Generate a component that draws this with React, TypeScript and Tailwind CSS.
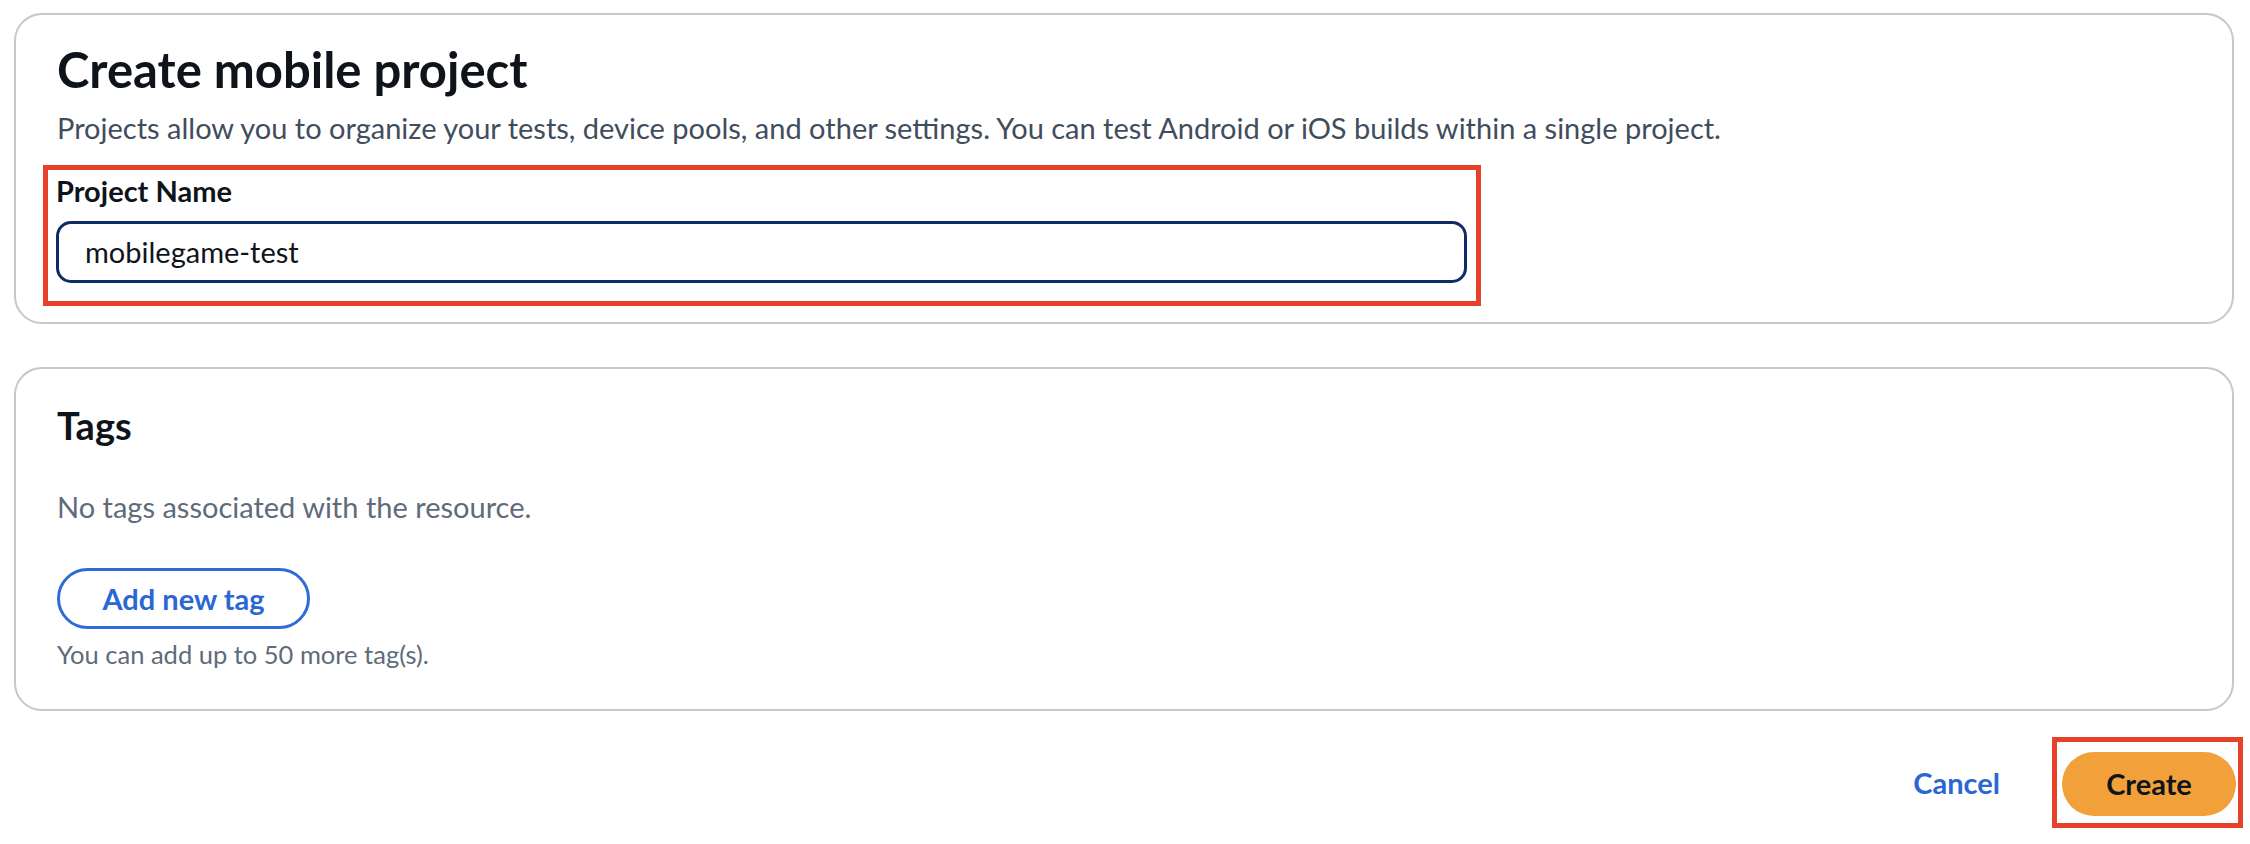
const font = { fontFamily: 'Lato, "Open Sans", Arial, sans-serif' };

function Card({ children, className = '' }: { children: React.ReactNode; className?: string }) {
  return (
    <section className={`rounded-[28px] border-2 border-[#c6c6cd] bg-white ${className}`}>
      {children}
    </section>
  );
}

export default function App() {
  return (
    <div className="min-h-screen bg-white pl-[14px] pr-[7px] pt-[13px] text-[#0f141a]" style={font}>
      <div className="mr-[9px] flex flex-col gap-[43px]">
        <Card className="h-[311px] px-[41px] pt-[26px]">
          <h1 className="text-[49px] leading-[56px] font-bold">Create mobile project</h1>
          <p className="mt-[12px] text-[29px] leading-[38px] text-[#414d5c]">
            Projects allow you to organize your tests, device pools, and other settings. You can test Android or iOS builds within a single project.
          </p>
          <div className="-ml-[14px] mt-[18px] w-[1438px] border-[5px] border-[#e8412b] pb-[18px] pl-[8px] pr-[9px] pt-[2px]">
            <label className="block text-[29px] leading-[38px] font-bold">Project Name</label>
            <div className="mt-[11px] flex h-[62px] items-center rounded-[15px] border-[3px] border-[#0f2b63] pl-[26px] text-[29px]">
              mobilegame-test
            </div>
          </div>
        </Card>

        <Card className="h-[344px] px-[41px] pt-[33px]">
          <h2 className="text-[38px] leading-[46px] font-bold">Tags</h2>
          <p className="mt-[40px] text-[29px] leading-[38px] text-[#5f6b7a]">No tags associated with the resource.</p>
          <button className="mt-[42px] flex h-[61px] w-[253px] items-center justify-center rounded-full border-[3px] border-[#2f6bd6] text-[29px] font-bold text-[#2a67d4]">
            Add new tag
          </button>
          <p className="mt-[8px] text-[25.5px] leading-[34px] text-[#5f6b7a]">You can add up to 50 more tag(s).</p>
        </Card>
      </div>

      <div className="mt-[26px] flex items-center justify-end">
        <button className="mr-[52px] text-[29px] font-bold text-[#2a67d4]">Cancel</button>
        <div className="border-[5px] border-[#e8412b] pb-[7px] pl-[5px] pr-[2px] pt-[10px]">
          <button className="h-[64px] w-[174px] rounded-full bg-[#f2a03a] text-[29px] font-bold text-[#0f141a]">
            Create
          </button>
        </div>
      </div>
    </div>
  );
}
